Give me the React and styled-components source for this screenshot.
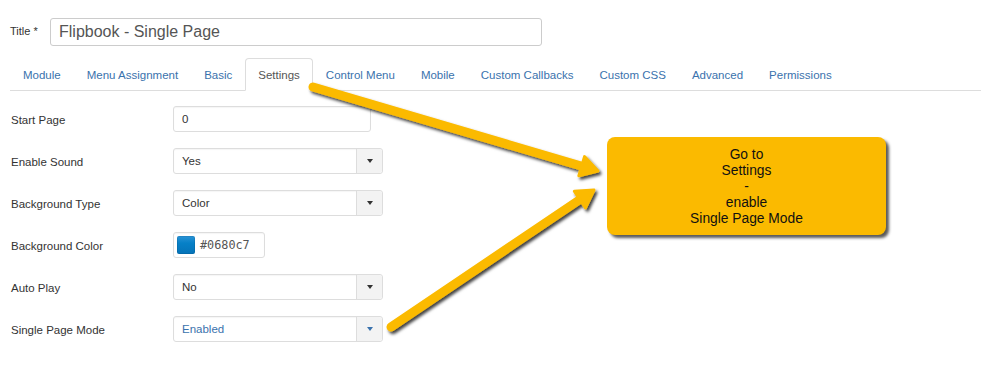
import React from "react";
import styled, { createGlobalStyle } from "styled-components";

const Global = createGlobalStyle`
  html, body { margin: 0; padding: 0; background: #fff; }
  body { font-family: "Liberation Sans", Arial, sans-serif; color: #333; }
  * { box-sizing: border-box; }
`;

const Page = styled.div`
  position: relative;
  width: 981px;
  height: 369px;
  padding: 18px 0 0 10px;
  overflow: hidden;
`;

const TitleRow = styled.div`
  display: flex;
  align-items: center;
`;

const TitleLabel = styled.label`
  width: 40px;
  font-size: 11px;
  color: #333;
  margin-top: -2px;
`;

const TitleInput = styled.div`
  width: 492px;
  height: 28px;
  border: 1px solid #ccc;
  border-radius: 3px;
  padding-left: 8px;
  display: flex;
  align-items: center;
  font-size: 16px;
  color: #555;
`;

const Tabs = styled.div`
  display: flex;
  margin-top: 12px;
  height: 33px;
  border-bottom: 1px solid #ddd;
`;

const Tab = styled.div`
  height: 33px;
  padding: 1px 12px 0;
  display: flex;
  align-items: center;
  font-size: 11.5px;
  color: ${(p) => (p.$active ? "#555" : "#3a72ad")};
  border: 1px solid ${(p) => (p.$active ? "#ddd" : "transparent")};
  border-bottom-color: ${(p) => (p.$active ? "#fff" : "transparent")};
  border-radius: 4px 4px 0 0;
  background: ${(p) => (p.$active ? "#fff" : "transparent")};
  margin-bottom: -1px;
`;

const Form = styled.div`
  display: grid;
  grid-template-columns: 163px auto;
  grid-auto-rows: 26px;
  row-gap: 16px;
  margin-top: 15px;
  align-items: center;
  justify-items: start;
`;

const Label = styled.div`
  font-size: 11.5px;
  color: #333;
  padding-left: 1px;
  padding-top: 2px;
`;

const Field = styled.div`
  width: ${(p) => p.$w}px;
  height: 26px;
  border: 1px solid #ddd;
  border-radius: 3px;
  display: flex;
  align-items: center;
  font-size: 11.5px;
  color: ${(p) => (p.$blue ? "#3a72ad" : "#333")};
  box-shadow: inset 0 1px 1px rgba(0, 0, 0, 0.04);
`;

const FieldText = styled.div`
  flex: 1;
  padding-left: 8px;
`;

const Caret = styled.div`
  width: 26px;
  height: 100%;
  border-left: 1px solid #ddd;
  background: #f3f3f3;
  border-radius: 0 3px 3px 0;
  display: flex;
  align-items: center;
  justify-content: center;
  &::after {
    content: "";
    border-left: 3.5px solid transparent;
    border-right: 3.5px solid transparent;
    border-top: 4px solid ${(p) => (p.$blue ? "#3a72ad" : "#333")};
  }
`;

const Swatch = styled.div`
  width: 18px;
  height: 18px;
  margin-left: 3px;
  border-radius: 2px;
  background: linear-gradient(#2a93d6, #0680c7 40%, #0573b8);
  box-shadow: inset 0 0 0 1px rgba(0, 0, 0, 0.08);
`;

const ColorText = styled.div`
  margin-left: 5px;
  font-family: "DejaVu Sans Mono", "Liberation Mono", monospace;
  font-size: 11.8px;
  color: #555;
`;

const Callout = styled.div`
  position: absolute;
  left: 607px;
  top: 137px;
  width: 279px;
  height: 98px;
  border-radius: 8px;
  background: #fbba00;
  box-shadow: 3px 3px 3px rgba(0, 0, 0, 0.65);
  display: flex;
  flex-direction: column;
  align-items: center;
  justify-content: center;
  font-size: 13.8px;
  line-height: 16px;
  color: #111;
  text-align: center;
  padding-top: 2px;
`;

const Overlay = styled.svg`
  position: absolute;
  left: 0;
  top: 0;
  pointer-events: none;
`;

const tabs = [
  "Module",
  "Menu Assignment",
  "Basic",
  "Settings",
  "Control Menu",
  "Mobile",
  "Custom Callbacks",
  "Custom CSS",
  "Advanced",
  "Permissions",
];

function Select({ value, blue }) {
  return (
    <Field $w={210} $blue={blue}>
      <FieldText>{value}</FieldText>
      <Caret $blue={blue} />
    </Field>
  );
}

function Arrow({ x1, y1, x2, y2 }) {
  const dx = x2 - x1;
  const dy = y2 - y1;
  const len = Math.hypot(dx, dy);
  const ux = dx / len;
  const uy = dy / len;
  const px = -uy;
  const py = ux;
  const hl = 17;
  const hw = 10;
  const bx = x2 - ux * hl;
  const by = y2 - uy * hl;
  const pts = `${x2},${y2} ${bx + px * hw},${by + py * hw} ${bx - px * hw},${by - py * hw}`;
  return (
    <g filter="url(#sh)">
      <line
        x1={x1}
        y1={y1}
        x2={bx + ux * 2}
        y2={by + uy * 2}
        stroke="#fbba00"
        strokeWidth="9"
        strokeLinecap="round"
      />
      <polygon points={pts} fill="#fbba00" stroke="#fbba00" strokeWidth="3" strokeLinejoin="round" />
    </g>
  );
}

export default function App() {
  return (
    <>
      <Global />
      <Page>
        <TitleRow>
          <TitleLabel>Title *</TitleLabel>
          <TitleInput>Flipbook - Single Page</TitleInput>
        </TitleRow>
        <Tabs>
          {tabs.map((t) => (
            <Tab key={t} $active={t === "Settings"}>
              {t}
            </Tab>
          ))}
        </Tabs>
        <Form>
          <Label>Start Page</Label>
          <Field $w={198}>
            <FieldText>0</FieldText>
          </Field>
          <Label>Enable Sound</Label>
          <Select value="Yes" />
          <Label>Background Type</Label>
          <Select value="Color" />
          <Label>Background Color</Label>
          <Field $w={92}>
            <Swatch />
            <ColorText>#0680c7</ColorText>
          </Field>
          <Label>Auto Play</Label>
          <Select value="No" />
          <Label>Single Page Mode</Label>
          <Select value="Enabled" blue />
        </Form>
        <Overlay width="981" height="369" viewBox="0 0 981 369">
          <defs>
            <filter id="sh" x="-10%" y="-10%" width="130%" height="130%">
              <feDropShadow dx="2" dy="2.5" stdDeviation="1.4" floodColor="#000" floodOpacity="0.75" />
            </filter>
          </defs>
          <Arrow x1={313} y1={87} x2={598} y2={171} />
          <Arrow x1={391} y1={327} x2={594} y2={190} />
        </Overlay>
        <Callout>
          <div>Go to</div>
          <div>Settings</div>
          <div>-</div>
          <div>enable</div>
          <div>Single Page Mode</div>
        </Callout>
      </Page>
    </>
  );
}
